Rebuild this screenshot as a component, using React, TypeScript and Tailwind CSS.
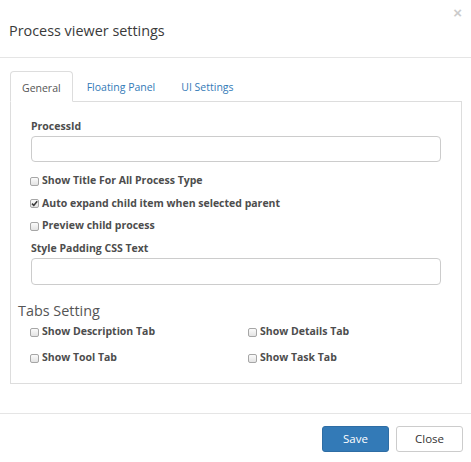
import React from "react";

const font = { fontFamily: '"Open Sans", "Noto Sans", sans-serif' };

function Box({ checked = false }: { checked?: boolean }) {
  return (
    <span className="relative inline-block w-[9px] h-[9px] rounded-[2px] border border-[#a6a6a6] bg-gradient-to-b from-[#fbfbfb] to-[#e3e3e3] shrink-0">
      {checked && (
        <svg viewBox="0 0 9 9" className="absolute left-[-1px] top-[-1px] w-[9px] h-[9px]">
          <path d="M2 4.6 L3.8 6.4 L7.2 2.2" fill="none" stroke="#3a3a3a" strokeWidth="1.6" />
        </svg>
      )}
    </span>
  );
}

function Check({ label, checked = false, className = "" }: { label: string; checked?: boolean; className?: string }) {
  return (
    <div className={"flex items-center gap-[3px] ml-[-1px] text-[10.5px] font-bold text-[#4d4d4d] " + className}>
      <Box checked={checked} />
      <span>{label}</span>
    </div>
  );
}

export default function App() {
  return (
    <div className="w-[471px] h-[462px] bg-white overflow-hidden" style={font}>
      {/* header */}
      <div className="relative h-[58px] border-b border-[#e5e5e5] pl-[9px] pt-[20px]">
        <div className="text-[14.4px] leading-[22px] text-[#3a3a3a]">Process viewer settings</div>
        <span
          className="absolute right-[9px] top-[3px] text-[15px] font-bold text-[#000] opacity-20 leading-[20px]"
          style={{ fontFamily: '"Liberation Sans", Arial, sans-serif' }}
        >
          ×
        </span>
      </div>

      {/* body */}
      <div className="pl-[10px] pr-[9px] pt-[13px] h-[355px]">
        <div className="flex h-[30px] text-[10.5px] leading-[16px]">
          <div className="px-[11px] pt-[8px] border border-[#ddd] border-b-white rounded-t-[4px] text-[#555] bg-white relative z-10 mb-[-1px] h-[31px]">
            General
          </div>
          <div className="px-[13px] pt-[8px] ml-[1px] text-[#337ab7]">Floating Panel</div>
          <div className="px-[13px] pt-[8px] text-[#337ab7]">UI Settings</div>
        </div>
        <div className="border border-[#ddd] h-[283px] pl-[7px] pr-[20px] pt-[16px]">
          <div className="ml-[13px]">
            <div className="text-[10.5px] font-bold leading-[16px] text-[#4d4d4d]">ProcessId</div>
            <div className="mt-[2px] h-[26px] border border-[#ccc] rounded-[4px]" />
            <div className="mt-[8px]">
              <Check label="Show Title For All Process Type" className="h-[22.5px]" />
              <Check label="Auto expand child item when selected parent" checked className="h-[22.5px]" />
              <Check label="Preview child process" className="h-[22.5px]" />
            </div>
            <div className="mt-[2.5px] text-[10.5px] font-bold leading-[16px] text-[#4d4d4d]">Style Padding CSS Text</div>
            <div className="mt-[2px] h-[27px] border border-[#ccc] rounded-[4px]" />
          </div>
          <div className="mt-[15px] text-[14.4px] leading-[22px] text-[#555]">Tabs Setting</div>
          <div className="ml-[13px] grid grid-cols-[218px_1fr] gap-y-[4px] mt-[-1px]">
            <Check label="Show Description Tab" className="h-[22px]" />
            <Check label="Show Details Tab" className="h-[22px]" />
            <Check label="Show Tool Tab" className="h-[22px]" />
            <Check label="Show Task Tab" className="h-[22px]" />
          </div>
        </div>
      </div>

      {/* footer */}
      <div className="border-t border-[#e5e5e5] flex justify-end gap-[7px] pr-[8px] pt-[12px]">
        <button className="w-[67px] h-[26px] rounded-[3px] bg-[#337ab7] border border-[#2e6da4] text-white text-[11.5px]">
          Save
        </button>
        <button className="w-[67px] h-[26px] rounded-[3px] bg-white border border-[#ccc] text-[#333] text-[11.5px]">
          Close
        </button>
      </div>
    </div>
  );
}
